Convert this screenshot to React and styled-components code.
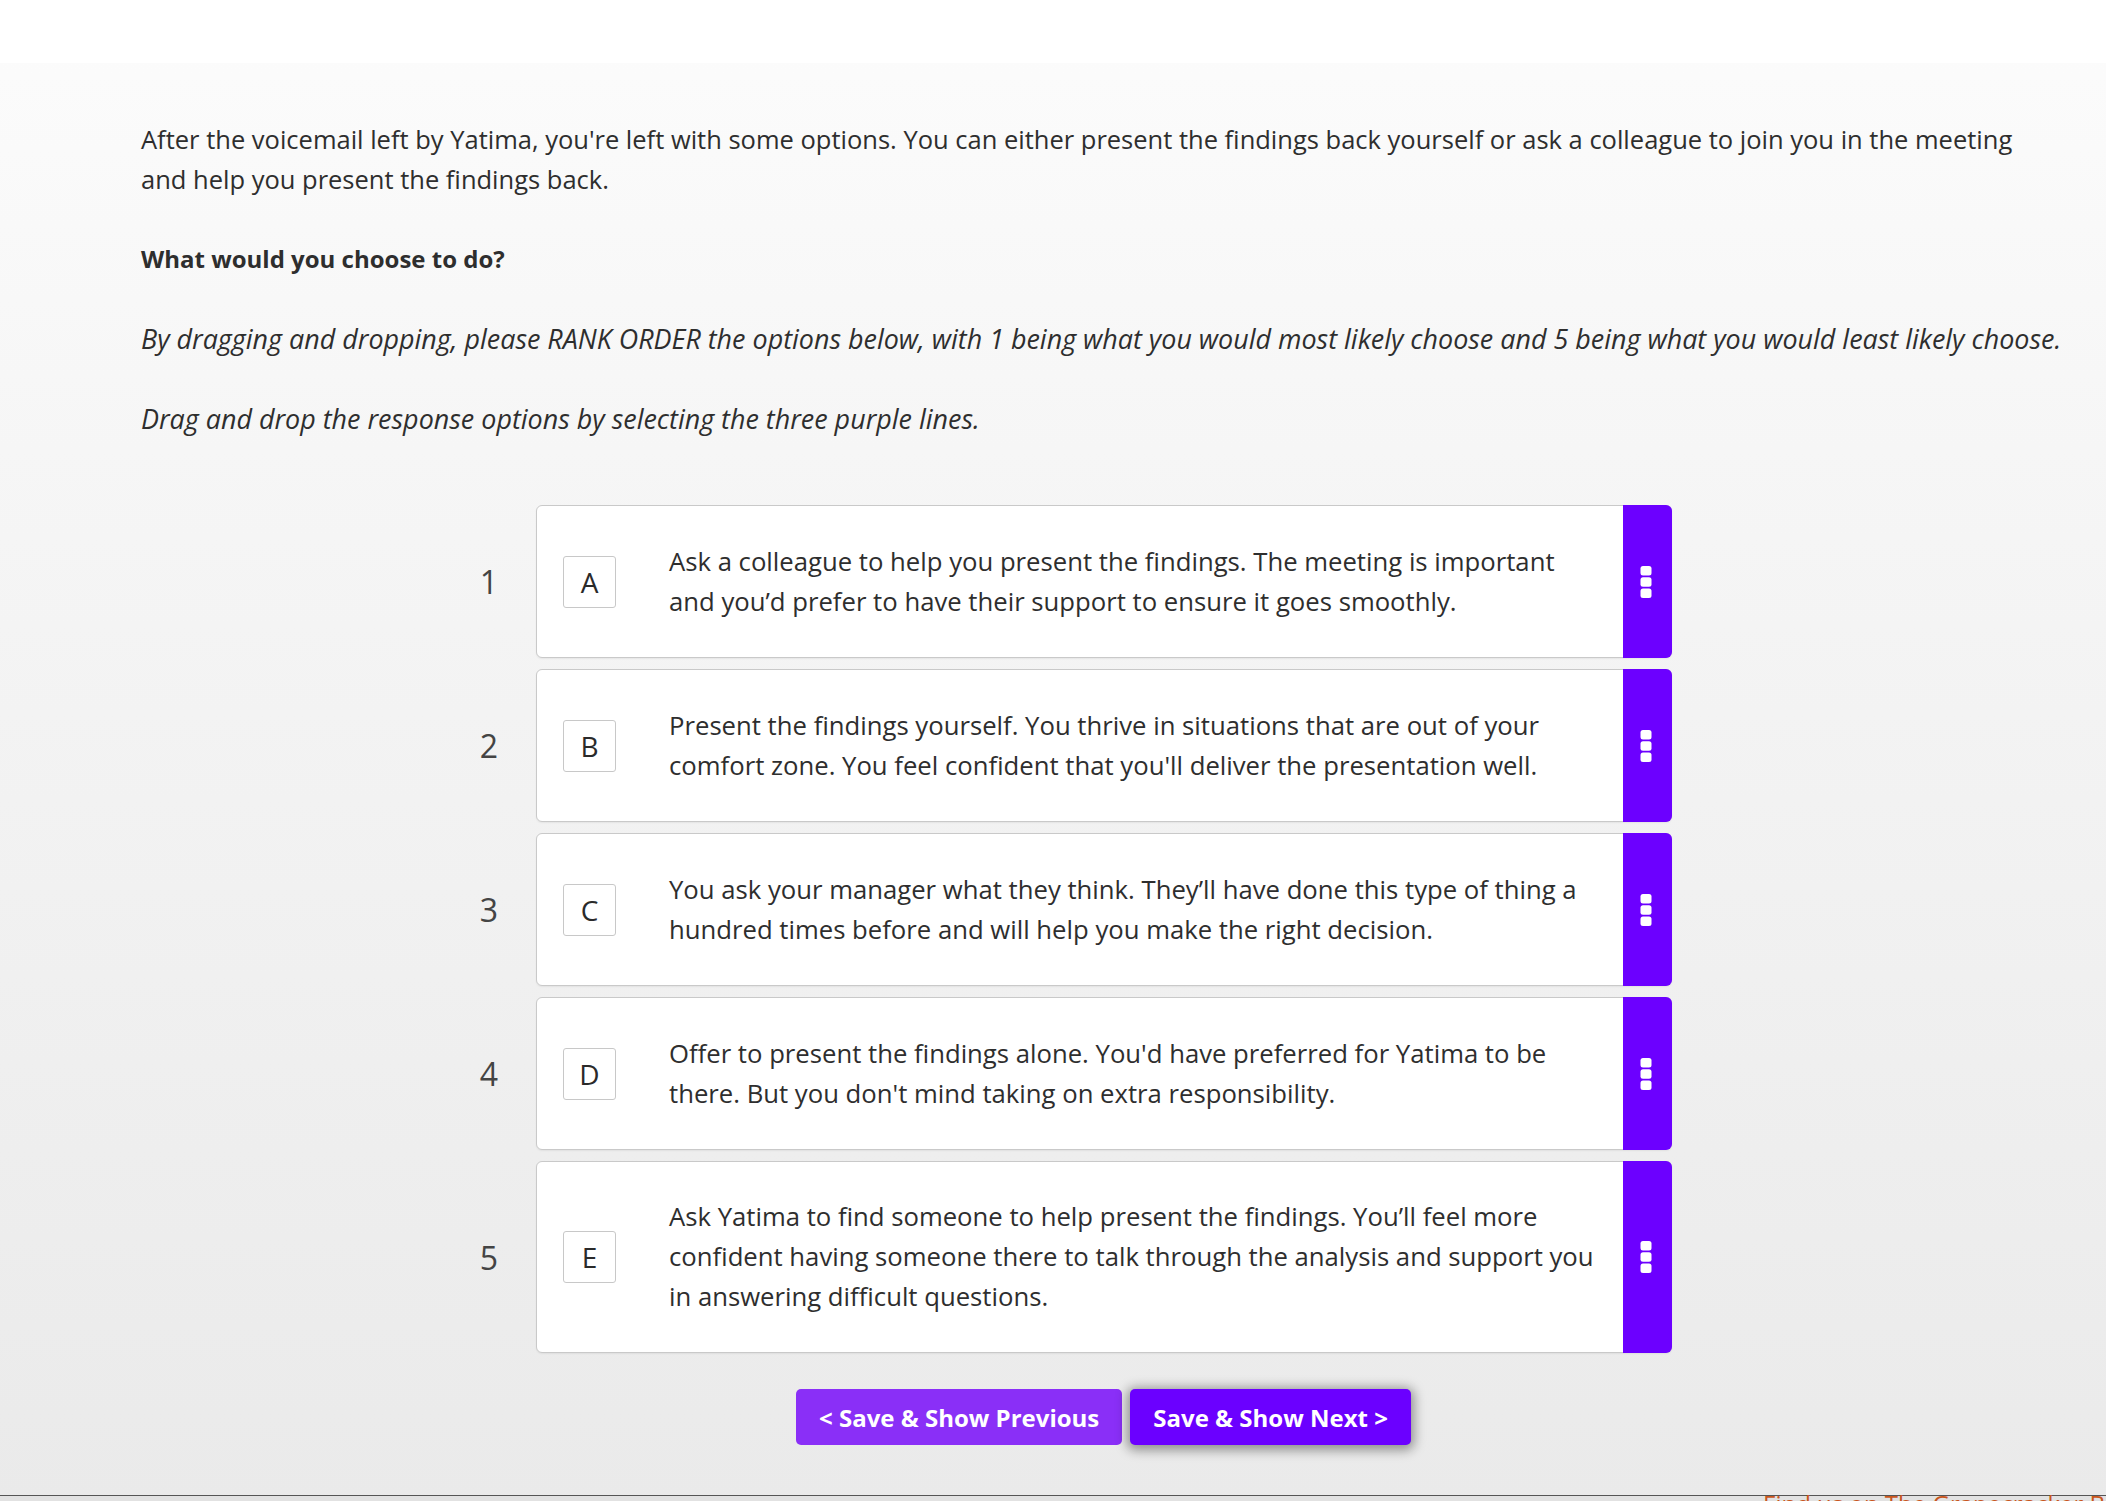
import React from 'react';
import styled, { createGlobalStyle } from 'styled-components';

const GlobalStyle = createGlobalStyle`
  html, body {
    margin: 0;
    padding: 0;
    height: 100%;
    overflow: hidden;
  }
  body {
    font-family: "Open Sans", "Noto Sans", sans-serif;
    color: #2e2e2e;
  }
`;

const Page = styled.div`
  width: 2106px;
  height: 1501px;
  display: flex;
  flex-direction: column;
  background: linear-gradient(#fcfcfc 0%, #f6f6f6 30%, #eaeaea 100%);
`;

const Header = styled.header`
  height: 63px;
  background: #ffffff;
  flex: none;
`;

const Content = styled.main`
  padding: 56px 20px 0 141px;
  flex: 1;
`;

const Lead = styled.p`
  margin: 0 0 40px;
  max-width: 1905px;
  font-size: 25.5px;
  line-height: 40px;
`;

const Question = styled.p`
  margin: 0 0 40px;
  font-size: 24px;
  line-height: 40px;
  font-weight: 700;
`;

const Instruction = styled.p`
  margin: 0 0 40px;
  font-size: 26.9px;
  line-height: 40px;
  font-style: italic;
  white-space: nowrap;
`;

const RankList = styled.ol`
  list-style: none;
  margin: 66px 0 0 318px;
  padding: 0;
  display: flex;
  flex-direction: column;
  gap: 11px;
  width: 1213px;
`;

const RankRow = styled.li`
  display: flex;
  align-items: center;
  gap: 17px;
`;

const RankNumber = styled.span`
  width: 60px;
  text-align: center;
  font-size: 32px;
  color: #444;
  flex: none;
`;

const Card = styled.div`
  flex: 1;
  display: flex;
  align-items: stretch;
  background: #fff;
  border: 1px solid #c9c9c9;
  border-radius: 6px;
  box-shadow: 0 1px 2px rgba(0, 0, 0, 0.06);
  min-height: 151px;
`;

const LetterBox = styled.span`
  align-self: center;
  flex: none;
  width: 51px;
  height: 50px;
  margin-left: 26px;
  border: 1px solid #c8c8c8;
  border-radius: 3px;
  display: flex;
  align-items: center;
  justify-content: center;
  font-size: 28px;
  color: #2a2a2a;
`;

const OptionText = styled.p`
  flex: 1;
  align-self: center;
  margin: 0;
  padding: 35px 22px 35px 53px;
  font-size: 25.7px;
  line-height: 40px;
  color: #2e2e2e;
`;

const Handle = styled.div`
  flex: none;
  width: 49px;
  margin: -1px -1px -1px 0;
  padding-right: 3px;
  box-sizing: border-box;
  background: #6c00ff;
  border-radius: 0 6px 6px 0;
  display: flex;
  align-items: center;
  justify-content: center;
  cursor: grab;
`;

const ButtonRow = styled.div`
  display: flex;
  gap: 8px;
  margin: 36px 0 0 655px;
`;

const NavButton = styled.button`
  height: 56px;
  padding: 0 23px;
  border: none;
  border-radius: 5px;
  font-family: "Open Sans", sans-serif;
  font-weight: 700;
  font-size: 24px;
  color: #fff;
  background: ${({ $primary }) => ($primary ? '#6b00ff' : '#8a2ff7')};
  box-shadow: ${({ $primary }) =>
    $primary ? '0 2px 12px 3px rgba(0, 0, 0, 0.4)' : 'none'};
  cursor: pointer;
`;

const Footer = styled.footer`
  flex: none;
  height: 5px;
  border-top: 1px solid #555;
  background: #e2e2e2;
  padding-left: 1763px;
  white-space: nowrap;
`;

const FooterLink = styled.span`
  display: block;
  margin-top: -4px;
  font-family: "Open Sans", sans-serif;
  font-size: 24px;
  line-height: 24px;
  color: #c9561c;
`;

const DragDots = () => (
  <svg width="12" height="32" viewBox="0 0 12 32">
    <rect x="0.5" y="0" width="11" height="9.5" rx="2.5" fill="#fff" />
    <rect x="0.5" y="11.25" width="11" height="9.5" rx="2.5" fill="#fff" />
    <rect x="0.5" y="22.5" width="11" height="9.5" rx="2.5" fill="#fff" />
  </svg>
);

const options = [
  {
    letter: 'A',
    text: 'Ask a colleague to help you present the findings. The meeting is important and you\u2019d prefer to have their support to ensure it goes smoothly.',
  },
  {
    letter: 'B',
    text: "Present the findings yourself. You thrive in situations that are out of your comfort zone. You feel confident that you'll deliver the presentation well.",
  },
  {
    letter: 'C',
    text: 'You ask your manager what they think. They\u2019ll have done this type of thing a hundred times before and will help you make the right decision.',
  },
  {
    letter: 'D',
    text: "Offer to present the findings alone. You'd have preferred for Yatima to be there. But you don't mind taking on extra responsibility.",
  },
  {
    letter: 'E',
    text: 'Ask Yatima to find someone to help present the findings. You\u2019ll feel more confident having someone there to talk through the analysis and support you in answering difficult questions.',
  },
];

export default function App() {
  return (
    <>
      <GlobalStyle />
      <Page>
        <Header />
        <Content>
          <Lead>
            After the voicemail left by Yatima, you're left with some options. You can either present the
            findings back yourself or ask a colleague to join you in the meeting and help you present the
            findings back.
          </Lead>
          <Question>What would you choose to do?</Question>
          <Instruction>
            By dragging and dropping, please RANK ORDER the options below, with 1 being what you would most
            likely choose and 5 being what you would least likely choose.
          </Instruction>
          <Instruction>Drag and drop the response options by selecting the three purple lines.</Instruction>

          <RankList>
            {options.map((o, i) => (
              <RankRow key={o.letter}>
                <RankNumber>{i + 1}</RankNumber>
                <Card>
                  <LetterBox>{o.letter}</LetterBox>
                  <OptionText>{o.text}</OptionText>
                  <Handle>
                    <DragDots />
                  </Handle>
                </Card>
              </RankRow>
            ))}
          </RankList>

          <ButtonRow>
            <NavButton>&lt; Save &amp; Show Previous</NavButton>
            <NavButton $primary>Save &amp; Show Next &gt;</NavButton>
          </ButtonRow>
        </Content>
        <Footer>
          <FooterLink>Find us on The Grapecracker Blog</FooterLink>
        </Footer>
      </Page>
    </>
  );
}
